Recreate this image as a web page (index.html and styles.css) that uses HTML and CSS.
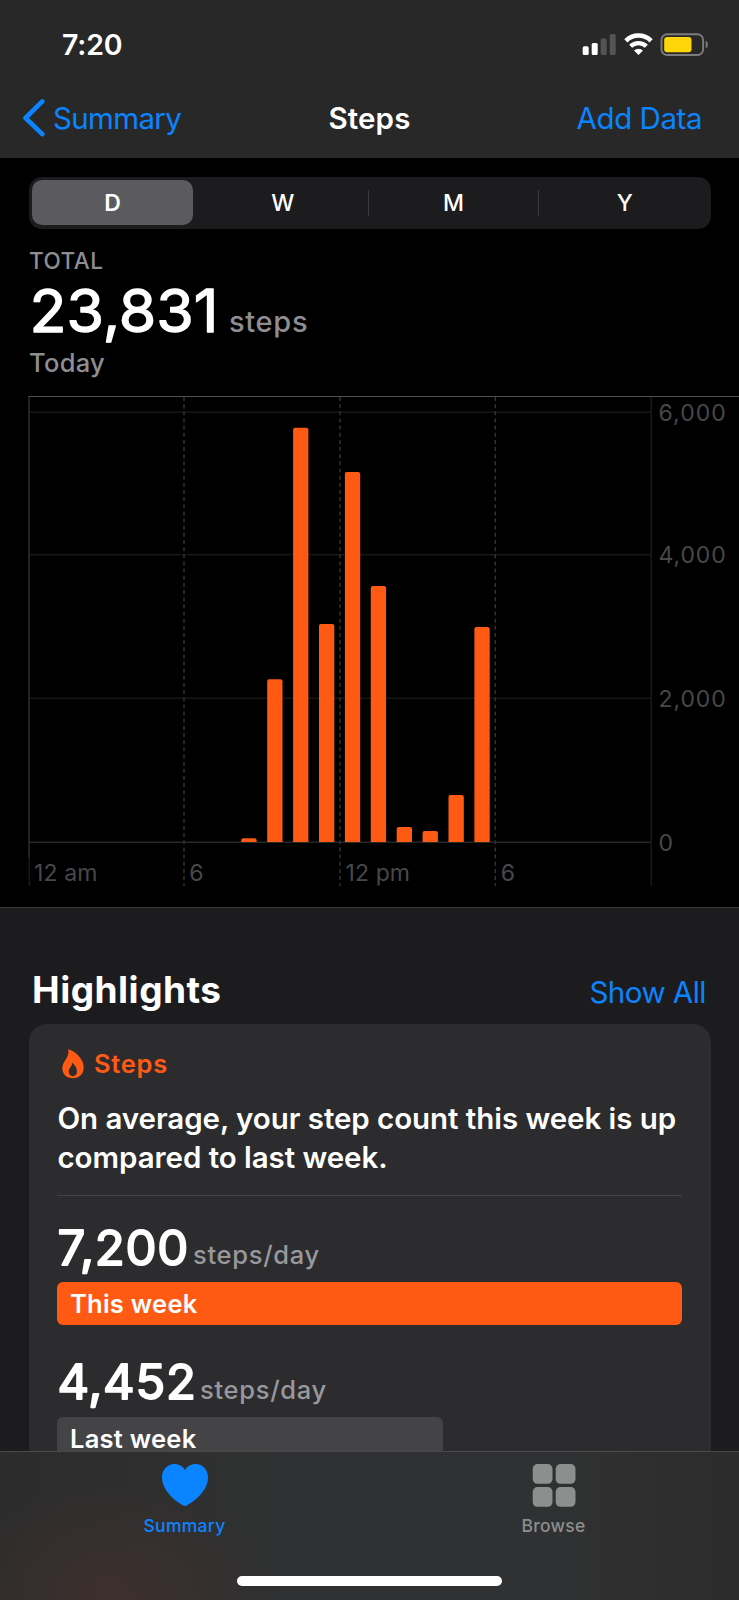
FILE: index.html
```html
<!DOCTYPE html>
<html lang="en">
<head>
<meta charset="utf-8">
<title>Steps</title>
<link rel="stylesheet" href="styles.css">
</head>
<body>
<div class="screen">
  <header class="header">
    <div class="status">
      <span class="time">7:20</span>
      <svg class="status-icons" width="128" height="24" viewBox="0 0 128 24">
        <g fill="#fff">
          <rect x="0.7" y="13.3" width="6" height="8.7" rx="1.6"/>
          <rect x="9.7" y="10" width="6" height="12" rx="1.6"/>
        </g>
        <g fill="#545454">
          <rect x="18.7" y="5.5" width="6" height="16.5" rx="1.6"/>
          <rect x="27.7" y="1" width="6" height="21" rx="1.6"/>
        </g>
        <g fill="none" stroke="#fff" stroke-width="4.6">
          <path d="M43.9 7.800a17.800 17.800 0 0 1 25.200 0"/>
          <path d="M48.700 13.300a11.200 11.200 0 0 1 15.600 0" stroke-width="4.300"/>
        </g>
        <path d="M56.500 21.900l-4.500-4.500a6.600 6.600 0 0 1 9 0z" fill="#fff"/>
        <rect x="79.500" y="1.200" width="41.600" height="20.800" rx="5.600" fill="none" stroke="#7c7c7e" stroke-width="1.900"/>
        <rect x="82.200" y="3.900" width="27.300" height="15.400" rx="3" fill="#ffd60a"/>
        <path d="M123.600 7.800c3 1 3 6.600 0 7.600z" fill="#7c7c7e"/>
      </svg>
    </div>
    <nav class="nav">
      <span class="back">
        <svg width="24" height="40" viewBox="0 0 24 40"><path d="M21.300 3.400L4.500 20l16.800 16.200" fill="none" stroke="#0a84ff" stroke-width="4.600" stroke-linecap="round" stroke-linejoin="round"/></svg>
        <span class="back-label">Summary</span>
      </span>
      <span class="nav-title">Steps</span>
      <span class="add">Add Data</span>
    </nav>
  </header>

  <main class="content">
    <div class="segments">
      <span class="seg seg-on">D</span>
      <span class="seg">W</span>
      <span class="seg seg-line">M</span>
      <span class="seg seg-line">Y</span>
    </div>
    <section class="total">
      <div class="total-label">TOTAL</div>
      <div class="total-row">
        <svg class="num" width="200" height="70"><text x="0.500" y="58.700" font-size="58.500" stroke-width="1.300" textLength="189" lengthAdjust="spacingAndGlyphs">23,831</text></svg>
        <span class="unit-lg">steps</span>
      </div>
      <div class="today">Today</div>
    </section>
    <svg class="chart" width="739" height="523" viewBox="0 384 739 523">
      <g fill="none" stroke="#171718" stroke-width="1.600">
        <path d="M29 412.200H651M29 554.600H651M29 698.200H651M651.200 397V886"/>
        <path d="M29.300 858V886"/>
      </g>
      <path d="M29 842.200H651" stroke="#272728" stroke-width="1.600"/>
      <path d="M184 397V886M340 397V886M495.300 397V886" stroke="#323233" stroke-width="1.500" stroke-dasharray="4 3.150"/>
      <path d="M29 858V396.500" stroke="#39393a" stroke-width="1.200"/>
      <path d="M28.500 396.500H739" stroke="#505052" stroke-width="1.200"/>
      <g fill="#ff5a14">
        <path d="M241.300 842v-1.700q0-2 2-2h11.300q2 0 2 2v1.700z"/>
        <path d="M267.200 842V681.300q0-2 2-2h11.300q2 0 2 2V842z"/>
        <path d="M293.100 842V429.800q0-2 2-2h11.300q2 0 2 2V842z"/>
        <path d="M319 842V626q0-2 2-2h11.300q2 0 2 2V842z"/>
        <path d="M344.900 842V474q0-2 2-2h11.300q2 0 2 2V842z"/>
        <path d="M370.800 842V588q0-2 2-2h11.300q2 0 2 2V842z"/>
        <path d="M396.700 842V829q0-2 2-2h11.300q2 0 2 2V842z"/>
        <path d="M422.600 842V833q0-2 2-2h11.300q2 0 2 2V842z"/>
        <path d="M448.500 842V797q0-2 2-2h11.300q2 0 2 2V842z"/>
        <path d="M474.400 842V629q0-2 2-2h11.300q2 0 2 2V842z"/>
      </g>
      <g class="axis">
        <text x="658.500" y="420.800" textLength="67.300">6,000</text>
        <text x="658.500" y="563.400" textLength="67.300">4,000</text>
        <text x="658.500" y="707.200" textLength="67.300">2,000</text>
        <text x="658.500" y="851">0</text>
        <text x="34" y="880.500" textLength="63.500">12 am</text>
        <text x="189.300" y="880.500">6</text>
        <text x="345.500" y="880.500" textLength="64.500">12 pm</text>
        <text x="500.800" y="880.500">6</text>
      </g>
    </svg>

    <section class="highlights">
      <div class="hl-head">
        <h2 class="hl-title">Highlights</h2>
        <span class="show-all">Show All</span>
      </div>
      <article class="card">
        <div class="card-kind">
          <svg width="22" height="30" viewBox="0 0 22 30"><path d="M6.200 0.300C13.500 2.200 21.700 10 21.700 18.600C21.700 25.200 17.200 29.300 11 29.300C4.700 29.300 0.300 25.200 0.300 19.300C0.300 12.300 8 8.600 6.200 0.300Z" fill="#ff5a14"/><path d="M10.400 13.200C11.600 15.600 15 17.800 15 22.300C15 25.400 13.200 27.200 10.900 27.200C8.500 27.200 6.800 25.400 6.800 22.500C6.800 18.500 10.300 17.400 10.400 13.200Z" fill="#2c2c2e"/></svg>
          <span class="kind-label">Steps</span>
        </div>
        <p class="card-text">On average, your step count this week is up<br>compared to last week.</p>
        <div class="rule"></div>
        <div class="stat">
          <svg class="num" width="136" height="86"><text x="0.500" y="68.500" font-size="48" stroke-width="1.900" textLength="131.500" lengthAdjust="spacingAndGlyphs">7,200</text></svg>
          <span class="unit">steps/day</span>
        </div>
        <div class="bar bar-now">This week</div>
        <div class="stat">
          <svg class="num" width="143" height="92"><text x="0.500" y="73.500" font-size="48" stroke-width="1.900" textLength="139" lengthAdjust="spacingAndGlyphs">4,452</text></svg>
          <span class="unit">steps/day</span>
        </div>
        <div class="bar bar-prev">Last week</div>
      </article>
    </section>
  </main>

  <footer class="tabs">
    <div class="tab-row">
      <div class="tab tab-on">
        <svg width="48" height="44" viewBox="0 0 48 44"><path d="M24 43C21.500 43 1 30.500 1 14.500C1 6.500 6.500 1 13.300 1C18 1 21.800 3.200 24 7C26.200 3.200 30 1 34.700 1C41.500 1 47 6.500 47 14.500C47 30.500 26.500 43 24 43Z" fill="#0a84ff"/></svg>
        <span class="tab-label">Summary</span>
      </div>
      <div class="tab">
        <svg width="44" height="44" viewBox="0 0 44 44" fill="#8d8e8e"><rect x="0.700" y="1" width="19.800" height="19.800" rx="4.800"/><rect x="23.700" y="1" width="19.800" height="19.800" rx="4.800"/><rect x="0.700" y="24" width="19.800" height="19.800" rx="4.800"/><rect x="23.700" y="24" width="19.800" height="19.800" rx="4.800"/></svg>
        <span class="tab-label">Browse</span>
      </div>
    </div>
    <div class="home"></div>
  </footer>
</div>
</body>
</html>
```
FILE: styles.css
```css
* { box-sizing: border-box; }
body { margin: 0; background: #000; font-family: Inter, "Liberation Sans", sans-serif; color: #fff; }
svg { display: block; flex: none; }
.screen { width: 739px; height: 1600px; display: flex; flex-direction: column; overflow: hidden; white-space: nowrap; }

.header { height: 158px; background: #282828; flex: none; }
.status { height: 88px; display: flex; align-items: center; justify-content: space-between; padding: 1px 29px 0 62px; }
.time { font-size: 28.5px; font-weight: 600; line-height: 40px; letter-spacing: -0.2px; }
.nav { height: 60px; display: grid; grid-template-columns: 1fr auto 1fr; align-items: center; padding: 0 21px; font-size: 29.5px; line-height: 40px; }
.back { display: flex; align-items: center; gap: 8px; color: #0a84ff; letter-spacing: -0.65px; }
.add { color: #0a84ff; text-align: right; padding-right: 16px; letter-spacing: -0.45px; }
.nav-title { font-weight: 600; letter-spacing: 0.1px; }

.content { flex: 1; min-height: 0; overflow: hidden; }
.segments { margin: 19px 28.5px 0 29px; height: 51.5px; border-radius: 13px; background: #1c1c1e; display: grid; grid-template-columns: 165.5px 170.5px 170px 1fr; align-items: center; padding: 0 0 0 3px; font-size: 23px; font-weight: 500; }
.seg { text-align: center; line-height: 26px; }
.seg-on { background: #5b5b5f; border-radius: 10px; line-height: 26px; padding: 10px 0 9px; margin-right: 4.5px; font-weight: 600; }
.seg-line { border-left: 1.5px solid #3a3a3c; }

.total { padding: 20.5px 29px 0; color: #8e8e92; font-weight: 500; }
.total-label { font-size: 22.5px; line-height: 24px; letter-spacing: 0.5px; }
.total-row { display: flex; align-items: flex-end; height: 70px; }
.num { fill: #fff; stroke: #fff; stroke-linejoin: round; font-weight: 400; overflow: visible; }
.unit-lg { font-size: 29px; line-height: 43px; font-weight: 500; letter-spacing: 0.7px; }
.today { font-size: 25.5px; line-height: 39px; height: 41px; letter-spacing: 0.3px; }
.axis { fill: #48484a; font-size: 23px; }

.highlights { background: #1c1c1e; border-top: 1px solid #3a3a3c; padding: 60px 28.5px 0 29px; height: 700px; }
.hl-head { display: flex; justify-content: space-between; align-items: baseline; height: 56px; padding: 0 4.5px 0 3px; }
.hl-title { margin: 0; font-size: 37px; font-weight: 700; line-height: 43px; letter-spacing: 0.5px; }
.show-all { color: #0a84ff; font-size: 29.5px; letter-spacing: -0.5px; }
.card { background: #2c2c2e; border-radius: 18px; padding: 20px 28.5px 0 28px; height: 620px; }
.card-kind { height: 40px; display: flex; align-items: center; gap: 10px; padding-left: 5px; color: #ff5a14; font-size: 25.5px; font-weight: 600; letter-spacing: 0.7px; }
.kind-label { line-height: 30px; margin-top: -1px; }
.card-text { margin: 14.5px 0 17.5px; font-size: 29.5px; line-height: 39.5px; font-weight: 600; letter-spacing: -0.06px; padding-left: 0.5px; }
.rule { height: 1px; background: #434345; }
.stat { display: flex; align-items: flex-end; color: #98989d; font-size: 25.5px; font-weight: 500; letter-spacing: 0.7px; }
.unit { line-height: 54px; }
.bar { height: 43px; border-radius: 6px; line-height: 43px; padding-left: 13px; font-size: 25.5px; font-weight: 600; letter-spacing: 0.25px; }
.bar-now { background: #ff5a14; }
.bar-prev { background: #444447; width: 386px; }

.tabs { height: 149px; flex: none; border-top: 1px solid #4a4a4b; background: radial-gradient(ellipse 160px 120px at 110px 145px, #3d302d, rgba(47, 48, 49, 0)), linear-gradient(90deg, #2c2c2c, #303132 40%, #303132 75%, #2c2c2c); display: flex; flex-direction: column; align-items: center; }
.tab-row { width: 739px; height: 124px; display: grid; grid-template-columns: 1fr 1fr; padding: 11px 1px 0 0; }
.tab { display: flex; flex-direction: column; align-items: center; color: #8d8e8e; font-size: 17.5px; font-weight: 500; letter-spacing: 0.3px; }
.tab-label { line-height: 20px; margin-top: 9px; }
.tab-on { color: #0a84ff; }
.home { width: 265px; height: 10px; border-radius: 5px; background: #fff; }
```
